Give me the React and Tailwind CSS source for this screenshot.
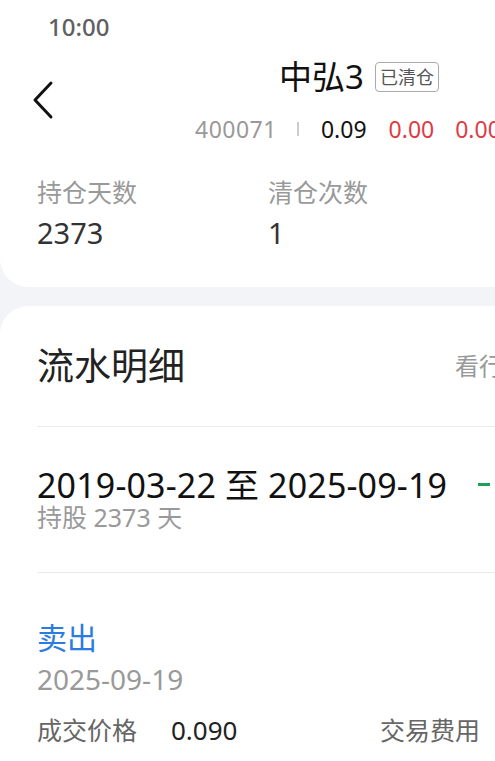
const font = { fontFamily: '"Noto Sans", "Noto Sans CJK SC", sans-serif' };

const App = () => {
  return (
    <div className="w-[495px] h-[761px] overflow-hidden bg-[#f3f4f8]" style={font}>
      <div className="w-[560px]">
        {/* top card */}
        <div className="bg-white rounded-bl-[28px] h-[287px]">
          <div className="h-[50px] flex items-start pl-[48px] pt-[12px]">
            <span className="text-[24px] leading-[30px] font-medium text-[#606060]">10:00</span>
          </div>

          <div className="relative h-[100px]">
            <svg className="absolute left-[30px] top-[30px]" width="28" height="40" viewBox="0 0 28 40" fill="none">
              <path d="M21 3 L5 20 L21 37" stroke="#111" strokeWidth="3" strokeLinecap="round" strokeLinejoin="round" />
            </svg>
            <div className="flex items-center pl-[279px] pt-[7px] gap-[11px]">
              <span className="text-[33px] leading-[40px] text-[#111]">中弘3</span>
              <span className="border border-[#aaa] rounded-[4px] px-[4px] text-[18px] leading-[28px] text-[#555]">已清仓</span>
            </div>
            <div className="flex items-center pl-[195px] pt-[18px] text-[23px] leading-[28px]">
              <span className="text-[#999] tracking-[0.5px]">400071</span>
              <span className="w-[2px] h-[14px] bg-[#ccc] ml-[20px] mr-[22px]"></span>
              <span className="text-[#111]">0.09</span>
              <span className="text-[#e03a45] ml-[22px]">0.00</span>
              <span className="text-[#e03a45] ml-[21px]">0.00</span>
            </div>
          </div>

          <div className="flex pl-[37px] pt-[26px]">
            <div className="w-[231px]">
              <div className="text-[25px] leading-[32px] text-[#999]">持仓天数</div>
              <div className="text-[29px] leading-[34px] text-[#333] mt-[8px]">2373</div>
            </div>
            <div>
              <div className="text-[25px] leading-[32px] text-[#999]">清仓次数</div>
              <div className="text-[29px] leading-[34px] text-[#333] mt-[8px]">1</div>
            </div>
          </div>
        </div>

        {/* detail card */}
        <div className="bg-white rounded-tl-[28px] mt-[19px] h-[500px] pl-[37px]">
          <div className="flex items-center h-[120px]">
            <span className="w-[418px] text-[37px] leading-[46px] text-[#222]">流水明细</span>
            <span className="text-[24px] text-[#999]">看行情</span>
          </div>
          <div className="h-[1px] bg-[#ebebeb]"></div>

          <div className="flex items-start pt-[39px] h-[145px]">
            <div>
              <div className="text-[34px] leading-[38px] text-[#111] tracking-[0.15px]">2019-03-22 至 2025-09-19</div>
              <div className="text-[25px] leading-[26px] text-[#999]">持股 2373 天</div>
            </div>
            <span className="ml-[31px] mt-[17px] w-[12px] h-[3px] bg-[#1aa05a]"></span>
          </div>
          <div className="h-[1px] bg-[#ebebeb]"></div>

          <div className="pt-[46px]">
            <div className="text-[30px] leading-[38px] text-[#2b7be0]">卖出</div>
            <div className="text-[28px] leading-[36px] text-[#999] mt-[4px]">2025-09-19</div>
            <div className="flex items-center mt-[17px] leading-[32px]">
              <span className="text-[25px] text-[#666] w-[134px]">成交价格</span>
              <span className="text-[26px] text-[#222] w-[209px]">0.090</span>
              <span className="text-[25px] text-[#666]">交易费用</span>
            </div>
          </div>
        </div>
      </div>
    </div>
  );
};

export default App;
